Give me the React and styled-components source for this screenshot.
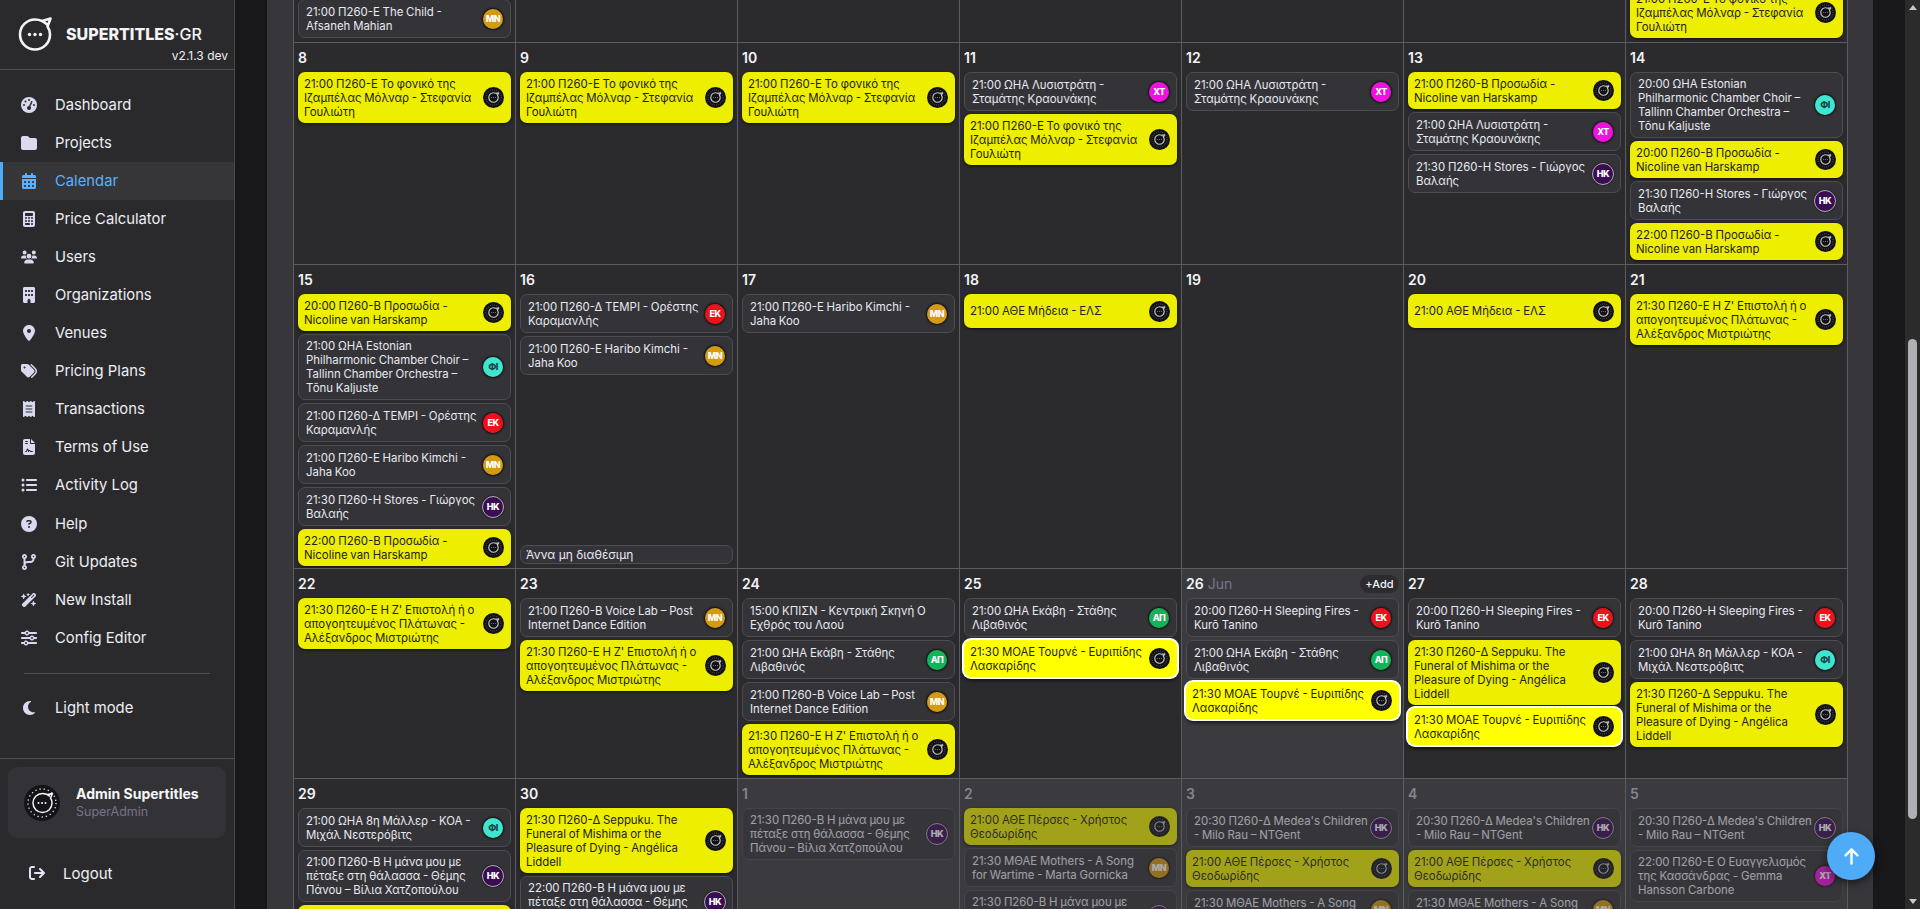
import React from "react";
import styled, { createGlobalStyle } from "styled-components";
import {
  FaGaugeHigh, FaFolder, FaCalendarDays, FaCalculator, FaUsers, FaBuilding, FaLocationDot, FaTags,
  FaReceipt, FaFileContract, FaListUl, FaCircleQuestion, FaCodeBranch, FaWandMagicSparkles, FaSliders,
  FaMoon, FaArrowRightFromBracket, FaArrowUp,
} from "react-icons/fa6";

const Global = createGlobalStyle`
  html, body { margin: 0; height: 100%; overflow: hidden; background: #18181b; }
  body { font-family: Inter, "Noto Sans", sans-serif; color: #f0f0f5; }
  * { box-sizing: border-box; }
`;

const Shell = styled.div`
  display: flex;
  height: 909px;
  width: 1920px;
  overflow: hidden;
`;

/* ---------- sidebar ---------- */
const Sidebar = styled.aside`
  width: 235px;
  flex: none;
  height: 100%;
  display: flex;
  flex-direction: column;
  background: #2a2a2d;
  border-right: 1px solid #4a4a4e;
`;
const Brand = styled.div`
  height: 70px;
  flex: none;
  padding: 17px 6px 0 17px;
  border-bottom: 1px solid #4f4f53;
  display: flex;
  flex-direction: column;
`;
const BrandRow = styled.div`
  display: flex;
  align-items: center;
  gap: 13px;
  height: 34px;
`;
const BrandName = styled.div`
  font-size: 16px;
  font-weight: 800;
  color: #f4f4f4;
  letter-spacing: 0;
  white-space: nowrap;
  span { font-weight: 500; }
`;
const Version = styled.div`
  font-size: 12px;
  text-align: right;
  color: #eeeef2;
  line-height: 14px;
  margin-top: -2px;
`;
const Nav = styled.nav`
  padding-top: 15.5px;
  display: flex;
  flex-direction: column;
`;
const NavItem = styled.div`
  height: 38.1px;
  display: flex;
  align-items: center;
  padding-left: ${(p) => (p.$active ? "18px" : "21px")};
  gap: 18px;
  font-size: 14.8px;
  font-weight: 400;
  color: ${(p) => (p.$active ? "#5cb0ff" : "#eeeef4")};
  background: ${(p) => (p.$active ? "#363639" : "transparent")};
  border-left: ${(p) => (p.$active ? "3px solid #4dabf7" : "0")};
  svg { color: ${(p) => (p.$active ? "#5cb0ff" : "#d9daf0")}; }
`;
const NavIcon = styled.span`
  width: 16px;
  height: 16px;
  display: flex;
  align-items: center;
  justify-content: center;
  font-size: 16px;
`;
const NavRule = styled.div`
  height: 1px;
  margin: 16px 24px 15px;
  background: #4f4f53;
`;
const SideFoot = styled.div`
  margin-top: auto;
  border-top: 1px solid #4f4f53;
  padding: 8px 8px 0;
  height: 151px;
  flex: none;
`;
const UserCard = styled.div`
  height: 71px;
  display: flex;
  align-items: center;
  gap: 16px;
  padding-left: 16px;
  background: #333337;
  border-radius: 9px;
`;
const UserName = styled.div`
  font-size: 14px;
  font-weight: 700;
  color: #f6f6f8;
  line-height: 18px;
`;
const UserRole = styled.div`
  font-size: 12.5px;
  color: #73738c;
  line-height: 18px;
`;
const Logout = styled.div`
  display: flex;
  align-items: center;
  gap: 18px;
  height: 38px;
  padding-left: 21px;
  margin-top: 16px;
  font-size: 15px;
  color: #f0f0f5;
  svg { color: #e4e4f4; font-size: 16px; }
`;

/* ---------- main ---------- */
const Main = styled.main`
  flex: 1;
  min-width: 0;
  height: 100%;
  padding-left: 32px;
  background: #18181b;
  overflow: hidden;
`;
const Card = styled.div`
  width: 1606px;
  height: 100%;
  padding-left: 26px;
  background: #37373b;
  overflow: hidden;
`;
const Grid = styled.div`
  width: 1555px;
  margin-top: -138px;
  display: grid;
  grid-template-columns: repeat(7, 222px);
  grid-template-rows: 180px 222px 304px 210px 300px;
  border-right: 1px solid #5c5c60;
`;
const Cell = styled.div`
  min-width: 0;
  display: flex;
  flex-direction: column;
  padding: 0 4px 4px;
  border-top: 1px solid #5c5c60;
  border-left: 1px solid #5c5c60;
  background: ${(p) => (p.$light ? "#3a3a3f" : "#2b2b2e")};
`;
const DayHead = styled.div`
  height: 29px;
  flex: none;
  display: flex;
  align-items: center;
  justify-content: space-between;
  font-size: 14px;
  font-weight: 600;
  color: ${(p) => (p.$dim ? "#85858b" : "#f4f4f8")};
`;
const DayMonth = styled.span`
  font-weight: 400;
  color: #77778a;
  margin-left: 4px;
`;
const AddPill = styled.span`
  width: 39px;
  height: 18px;
  border-radius: 9px;
  background: #2c2c30;
  color: #f4f4f8;
  font-size: 11px;
  font-weight: 500;
  display: flex;
  align-items: center;
  justify-content: center;
`;
const Stack = styled.div`
  flex: 1;
  min-height: 0;
  display: flex;
  flex-direction: column;
  justify-content: ${(p) => (p.$end ? "flex-end" : "flex-start")};
  gap: 3px;
`;
const Event = styled.div`
  display: flex;
  align-items: center;
  justify-content: space-between;
  gap: 2px;
  flex: none;
  font-size: 11.4px;
  word-spacing: -0.4px;
  line-height: 14px;
  border-radius: 7px;
  min-height: 34px;
  opacity: ${(p) => (p.$dim ? 0.58 : 1)};
  ${(p) =>
    p.$kind === "d" &&
    `
    background: #343438;
    border: 1px solid #4c4c51;
    color: #e9e9f2;
    padding: 4px 6px 4px 7px;
    min-height: 39px;
  `}
  ${(p) =>
    p.$kind === "y" &&
    `
    background: #eeee00;
    color: #232318;
    padding: 4.5px 7px 4.5px 6px;
    box-shadow: 0 1px 3px rgba(0,0,0,.7);
  `}
  ${(p) =>
    p.$kind === "w" &&
    `
    background: #ffff00;
    color: #232318;
    padding: 4.5px 7px 4.5px 6px;
    box-shadow: 0 0 0 2px #fff, 0 3px 4px rgba(0,0,0,.8);
  `}
`;
const EventText = styled.div`
  min-width: 0;
  flex: 1;
`;
const Avatar = styled.div`
  width: 22px;
  height: 22px;
  flex: none;
  border-radius: 50%;
  display: flex;
  align-items: center;
  justify-content: center;
  font-size: 9px;
  font-weight: 800;
  letter-spacing: -0.5px;
  background: ${(p) => p.$bg};
  color: ${(p) => p.$fg || "#fff"};
  border: 1px solid ${(p) => p.$ring || "transparent"};
  background-clip: padding-box;
  box-shadow: 0 0 2px rgba(0, 0, 0, 0.7);
`;
const LogoBadge = styled.div`
  width: 21px;
  height: 21px;
  flex: none;
  border-radius: 50%;
  background: #111116;
  display: flex;
  align-items: center;
  justify-content: center;
`;
const Note = styled.div`
  margin-top: auto;
  height: 19px;
  flex: none;
  padding-left: 5px;
  display: flex;
  align-items: center;
  font-size: 12px;
  color: #e9e9f2;
  background: #343438;
  border: 1px solid #4c4c51;
  border-radius: 7px;
`;
const FloatTop = styled.button`
  position: fixed;
  left: 1827px;
  top: 832px;
  width: 48px;
  height: 48px;
  padding: 0;
  border: 0;
  border-radius: 50%;
  background: #4dabf7;
  color: #fff;
  font-size: 19px;
  display: flex;
  align-items: center;
  justify-content: center;
  box-shadow: 0 3px 8px rgba(0, 0, 0, 0.55);
`;
const ScrollTrack = styled.div`
  width: 15px;
  flex: none;
  height: 100%;
  background: #2b2b2b;
  display: flex;
  flex-direction: column;
  align-items: center;
`;
const ScrollArrow = styled.div`
  width: 0;
  height: 0;
  margin: ${(p) => (p.$down ? "auto 0 5px" : "5px 0 0")};
  border-left: 4.5px solid transparent;
  border-right: 4.5px solid transparent;
  ${(p) => (p.$down ? "border-top: 5px solid #c8c8c8;" : "border-bottom: 5px solid #c8c8c8;")}
`;
const ScrollThumb = styled.div`
  width: 9px;
  height: 480px;
  margin-top: 329px;
  border-radius: 5px;
  background: #b0b0b4;
`;

/* ---------- drawings ---------- */
const Mark = ({ size = 36, dots = true }) => (
  <svg width={size} height={size} viewBox="0 0 36 36" fill="none">
    <path
      d="M31 9.5 C27.5 5.5 23 3.5 18 3.5 C9.7 3.5 3 10.2 3 18.5 C3 26.8 9.7 33.5 18 33.5 C26.3 33.5 33 26.8 33 18.5 C33 15.5 32.2 13 30.5 10.5 L33.5 2.5 L25 5"
      stroke="#f4f4f4"
      strokeWidth="2.6"
      strokeLinecap="round"
      strokeLinejoin="round"
    />
    {dots && (
      <g fill="#f4f4f4">
        <circle cx="12.5" cy="18.5" r="1.7" />
        <circle cx="18" cy="18.5" r="1.7" />
        <circle cx="23.5" cy="18.5" r="1.7" />
      </g>
    )}
  </svg>
);

const TinyMark = () => (
  <svg width="17" height="17" viewBox="0 0 36 36" fill="none">
    <circle cx="18" cy="18" r="16" stroke="#8a8a8a" strokeWidth="1.6" strokeDasharray="1.5 3" />
    <path
      d="M27 12 C25 9.5 22 8 18 8 C12.5 8 8 12.5 8 18 C8 23.5 12.5 28 18 28 C23.5 28 28 23.5 28 18 C28 16.5 27.5 15 26.5 13.5 L29 8 L22.5 9"
      stroke="#c8c8c8"
      strokeWidth="2.4"
      strokeLinejoin="round"
    />
    <path d="M13 18 H23" stroke="#777" strokeWidth="2.4" strokeDasharray="2 2" />
  </svg>
);

const UserAvatar = () => (
  <svg width="36" height="36" viewBox="0 0 36 36" fill="none">
    <circle cx="18" cy="18" r="18" fill="#141418" />
    <circle cx="18" cy="18" r="14" stroke="#e8e8e8" strokeWidth="1.4" strokeDasharray="1.2 3" />
    <path
      d="M25.5 11.5 C23.5 9.5 21 8.5 18 8.5 C12.7 8.5 8.5 12.7 8.5 18 C8.5 23.3 12.7 27.5 18 27.5 C23.3 27.5 27.5 23.3 27.5 18 C27.5 16 27 14.4 26 13 L28 8.5 L23 9.5"
      stroke="#f4f4f4"
      strokeWidth="1.5"
      strokeLinejoin="round"
      transform="translate(0.5 0)"
    />
    <g fill="#f4f4f4">
      <circle cx="14.5" cy="18" r="1" />
      <circle cx="18" cy="18" r="1" />
      <circle cx="21.5" cy="18" r="1" />
    </g>
  </svg>
);

/* ---------- data ---------- */
const AV = {
  MN: { bg: "#d49a12", label: "ΜΝ" },
  EK: { bg: "#f0101c", label: "ΕΚ" },
  FI: { bg: "#3fe6cf", fg: "#14423c", label: "ΦΙ" },
  XT: { bg: "#f010e0", label: "ΧΤ" },
  HK: { bg: "#3a0d52", ring: "#b9a8c8", label: "ΗΚ" },
  AP: { bg: "#12b45a", label: "ΑΠ" },
};

const F = "21:00 Π260-Ε Το φονικό της Ιζαμπέλας Μόλναρ - Στεφανία Γουλιώτη";
const LYS = "21:00 ΩΗΑ Λυσιστράτη - Σταμάτης Κραουνάκης";
const ST = "21:30 Π260-Η Stores - Γιώργος Βαλαής";
const EST = (t) => `${t} ΩΗΑ Estonian Philharmonic Chamber Choir – Tallinn Chamber Orchestra – Tõnu Kaljuste`;
const PR = (t) => `${t} Π260-Β Προσωδία - Nicoline van Harskamp`;
const TE = "21:00 Π260-Δ TEMPI - Ορέστης Καραμανλής";
const HA = "21:00 Π260-Ε Haribo Kimchi - Jaha Koo";
const MD = "21:00 ΑΘΕ Μήδεια - ΕΛΣ";
const ZE = "21:30 Π260-Ε Η Ζ' Επιστολή ή ο απογοητευμένος Πλάτωνας - Αλέξανδρος Μιστριώτης";
const VL = "21:00 Π260-Β Voice Lab – Post Internet Dance Edition";
const EKA = "21:00 ΩΗΑ Εκάβη - Στάθης Λιβαθινός";
const TO = "21:30 ΜΟΑΕ Τουρνέ - Ευριπίδης Λασκαρίδης";
const SL = "20:00 Π260-Η Sleeping Fires - Kurō Tanino";
const SE = "21:30 Π260-Δ Seppuku. The Funeral of Mishima or the Pleasure of Dying - Angélica Liddell";
const MA = "21:00 ΩΗΑ 8η Μάλλερ - ΚΟΑ - Μιχάλ Νεστερόβιτς";
const MAN = (t) => `${t} Π260-Β Η μάνα μου με πέταξε στη θάλασσα - Θέμης Πάνου – Βίλια Χατζοπούλου`;
const ME = "20:30 Π260-Δ Medea's Children - Milo Rau – NTGent";
const PE = "21:00 ΑΘΕ Πέρσες - Χρήστος Θεοδωρίδης";
const MO = "21:30 ΜΘΑΕ Mothers - A Song for Wartime - Marta Gornicka";

const d = (text, av) => ({ kind: "d", text, av });
const y = (text) => ({ kind: "y", text });
const w = (text) => ({ kind: "w", text });

const ROWS = [
  [
    { n: 1, ev: [d("21:00 Π260-Ε The Child - Afsaneh Mahian", "MN")] },
    { n: 2 }, { n: 3 }, { n: 4 }, { n: 5 }, { n: 6 },
    { n: 7, ev: [y(F)] },
  ],
  [
    { n: 8, ev: [y(F)] },
    { n: 9, ev: [y(F)] },
    { n: 10, ev: [y(F)] },
    { n: 11, ev: [d(LYS, "XT"), y(F)] },
    { n: 12, ev: [d(LYS, "XT")] },
    { n: 13, ev: [y(PR("21:00")), d(LYS, "XT"), d(ST, "HK")] },
    { n: 14, ev: [d(EST("20:00"), "FI"), y(PR("20:00")), d(ST, "HK"), y(PR("22:00"))] },
  ],
  [
    { n: 15, ev: [y(PR("20:00")), d(EST("21:00"), "FI"), d(TE, "EK"), d(HA, "MN"), d(ST, "HK"), y(PR("22:00"))] },
    { n: 16, ev: [d(TE, "EK"), d(HA, "MN")], note: "Άννα μη διαθέσιμη" },
    { n: 17, ev: [d(HA, "MN")] },
    { n: 18, ev: [y(MD)] },
    { n: 19 },
    { n: 20, ev: [y(MD)] },
    { n: 21, ev: [y(ZE)] },
  ],
  [
    { n: 22, ev: [y(ZE)] },
    { n: 23, ev: [d(VL, "MN"), y(ZE)] },
    { n: 24, ev: [d("15:00 ΚΠΙΣΝ - Κεντρική Σκηνή Ο Εχθρός του Λαού"), d(EKA, "AP"), d(VL, "MN"), y(ZE)] },
    { n: 25, ev: [d(EKA, "AP"), w(TO)] },
    { n: 26, today: true, ev: [d(SL, "EK"), d(EKA, "AP"), w(TO)] },
    { n: 27, ev: [d(SL, "EK"), y(SE), w(TO)] },
    { n: 28, ev: [d(SL, "EK"), d(MA, "FI"), y(SE)] },
  ],
  [
    { n: 29, ev: [d(MA, "FI"), d(MAN("21:00"), "HK"), y(SE)] },
    { n: 30, ev: [y(SE), d(MAN("22:00"), "HK")] },
    { n: 1, dim: true, ev: [d(MAN("21:30"), "HK")] },
    { n: 2, dim: true, ev: [y(PE), d(MO, "MN"), d(MAN("21:30"), "HK")] },
    { n: 3, dim: true, ev: [d(ME, "HK"), y(PE), d(MO, "MN")] },
    { n: 4, dim: true, ev: [d(ME, "HK"), y(PE), d(MO, "MN")] },
    { n: 5, dim: true, ev: [d(ME, "HK"), d("22:00 Π260-Ε Ο Ευαγγελισμός της Κασσάνδρας - Gemma Hansson Carbone", "XT")] },
  ],
];

const NAV = [
  ["Dashboard", FaGaugeHigh],
  ["Projects", FaFolder],
  ["Calendar", FaCalendarDays, true],
  ["Price Calculator", FaCalculator],
  ["Users", FaUsers],
  ["Organizations", FaBuilding],
  ["Venues", FaLocationDot],
  ["Pricing Plans", FaTags],
  ["Transactions", FaReceipt],
  ["Terms of Use", FaFileContract],
  ["Activity Log", FaListUl],
  ["Help", FaCircleQuestion],
  ["Git Updates", FaCodeBranch],
  ["New Install", FaWandMagicSparkles],
  ["Config Editor", FaSliders],
];

const CalEvent = ({ e, dim }) => (
  <Event $kind={e.kind} $dim={dim}>
    <EventText>{e.text}</EventText>
    {e.kind === "d" ? (
      e.av && (
        <Avatar $bg={AV[e.av].bg} $fg={AV[e.av].fg} $ring={AV[e.av].ring}>
          {AV[e.av].label}
        </Avatar>
      )
    ) : (
      <LogoBadge>
        <TinyMark />
      </LogoBadge>
    )}
  </Event>
);

export default function App() {
  return (
    <Shell>
      <Global />
      <Sidebar>
        <Brand>
          <BrandRow>
            <Mark />
            <BrandName>
              SUPERTITLES<span>·GR</span>
            </BrandName>
          </BrandRow>
          <Version>v2.1.3 dev</Version>
        </Brand>
        <Nav>
          {NAV.map(([label, Icon, active]) => (
            <NavItem key={label} $active={active}>
              <NavIcon>
                <Icon />
              </NavIcon>
              {label}
            </NavItem>
          ))}
          <NavRule />
          <NavItem>
            <NavIcon>
              <FaMoon />
            </NavIcon>
            Light mode
          </NavItem>
        </Nav>
        <SideFoot>
          <UserCard>
            <UserAvatar />
            <div>
              <UserName>Admin Supertitles</UserName>
              <UserRole>SuperAdmin</UserRole>
            </div>
          </UserCard>
          <Logout>
            <FaArrowRightFromBracket />
            Logout
          </Logout>
        </SideFoot>
      </Sidebar>
      <Main>
        <Card>
          <Grid>
            {ROWS.map((row, ri) =>
              row.map((c) => (
                <Cell key={`${ri}-${c.n}`} $light={c.today || c.dim}>
                  <DayHead $dim={c.dim}>
                    <span>
                      {c.n}
                      {c.today && <DayMonth>Jun</DayMonth>}
                    </span>
                    {c.today && <AddPill>+Add</AddPill>}
                  </DayHead>
                  <Stack $end={ri === 0}>
                    {(c.ev || []).map((e, i) => (
                      <CalEvent key={i} e={e} dim={c.dim} />
                    ))}
                    {c.note && <Note>{c.note}</Note>}
                  </Stack>
                </Cell>
              ))
            )}
          </Grid>
        </Card>
      </Main>
      <ScrollTrack>
        <ScrollArrow />
        <ScrollThumb />
        <ScrollArrow $down />
      </ScrollTrack>
      <FloatTop aria-label="Back to top">
        <FaArrowUp />
      </FloatTop>
    </Shell>
  );
}
